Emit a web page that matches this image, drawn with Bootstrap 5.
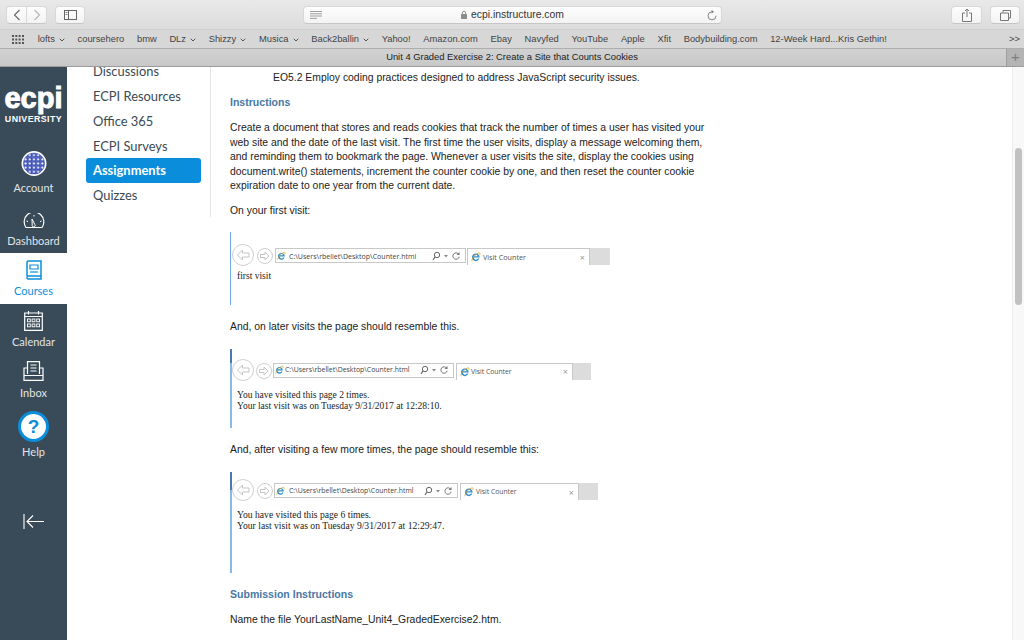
<!DOCTYPE html>
<html lang="en">
<head>
<meta charset="utf-8">
<title>Unit 4 Graded Exercise 2</title>
<link href="https://cdn.jsdelivr.net/npm/bootstrap@5.3.0/dist/css/bootstrap.min.css" rel="stylesheet">
<style>
html,body{height:640px;overflow:hidden;background:#fff}
body{font-family:"Liberation Sans",Arial,sans-serif;color:#222;width:1024px}
.chrome-bar{height:29px;background:linear-gradient(#e9e9e9,#dcdcdc);padding:6px 6px 0 6px}
.tool-btn{height:18px;flex-shrink:0;background:linear-gradient(#fdfdfd,#f3f3f3);border:1px solid #d8d8d8;border-bottom-color:#c6c6c6;border-radius:4px;display:flex;align-items:center;justify-content:center}
.addr{width:419px;margin-left:218px;margin-right:229px;font-size:10.4px;color:#333;padding:0 4px 0 6px}
.addr-host{flex:1;text-align:center;padding-right:4px}
.btn-back{width:21px;border-radius:4px 0 0 4px}
.btn-fwd{width:20px;border-radius:0 4px 4px 0;border-left:0}
.btn-panel,.btn-tabs{width:30px}
.btn-share{width:31px}
.bm-bar{height:20px;background:#d7d7d7;border-top:1px solid #cfcfcf;border-bottom:1px solid #aeaeae;font-size:9.35px;color:#444;padding-left:12px;gap:12.7px;white-space:nowrap}
.bm-grid{margin-right:1px;flex-shrink:0}
.bm-caret{margin-left:4px;vertical-align:0}
.tab-bar{height:18px;background:linear-gradient(#d2d2d2,#c8c8c8);border-bottom:1px solid #9b9b9b;font-size:9.4px;color:#1c1c1c}
.tab-title{flex:1;text-align:center;padding-left:18px}
.tab-plus{width:18px;height:17px;background:#b4b4b4;border-left:1px solid #9f9f9f;color:#7d7d7d;font-size:15px;line-height:16px;text-align:center}
.page-area{height:573px;position:relative}
.side{width:67px;background:#394b58;color:#e1e5e8;font-family:Lato,sans-serif;font-size:11px;flex-shrink:0}
.logo{height:75px;padding-top:14px;text-align:center;color:#fff;overflow:hidden}
.logo-main{font-family:"Liberation Sans",sans-serif;font-weight:700;font-size:29px;line-height:34px;-webkit-text-stroke:1px #fff}
.logo-sub{font-family:"Liberation Sans",sans-serif;font-weight:700;font-size:8.8px;letter-spacing:.45px;line-height:9px;white-space:nowrap}
.side-item{display:flex;flex-direction:column;align-items:center;text-decoration:none;color:inherit;line-height:13px}
.side-item.on{background:#fff;color:#0a8edc}
.it-acct{height:52px;padding-top:9px}.it-acct span{margin-top:5px}
.it-dash{height:59px;padding-top:19px}.it-dash span{margin-top:6px}
.it-course{height:51px;padding-top:7px}.it-course span{margin-top:4px}
.it-cal{height:50px;padding-top:6px}.it-cal span{margin-top:4px}
.it-inbox{height:53px;padding-top:7px}.it-inbox span{margin-top:5px}
.it-help{height:66px;padding-top:4px}.it-help span{margin-top:3px}
.it-collapse{padding-top:41px}
.course-nav{width:144px;height:150px;padding:0 9px 0 19px;border-right:1px solid #e4e4e4;font-family:Lato,sans-serif;font-size:12.9px;color:#3b4a54;flex-shrink:0;margin-right:19px}
.nav-row{height:25px;line-height:24px;padding-left:7px;white-space:nowrap}
.nav-row.first{height:17px;line-height:9px}
.nav-row.on{background:#0a8edc;color:#fff;font-weight:700;border-radius:3px;margin-top:-1px;line-height:25px}
.body-copy{font-size:10.4px;line-height:14.55px;width:700px;color:#222}
.body-copy p{margin:0}
.outcome{padding-left:43px;padding-top:4px}
.sect-h{font-weight:700;color:#4a78a5;font-size:10.55px}
.body-copy .m-i{margin-top:9px}
.body-copy .m-p{margin-top:12px}
.body-copy .m-on{margin-top:10px}
.body-copy .m-a{margin-top:15px}
.body-copy .m-s{margin-top:14px}
.body-copy .m-n{margin-top:11px}
.body-copy .para{width:490px}
.shot{border-left:2px solid #72aee0}
.shot-1{width:380px;height:73px;margin-top:14px;padding-top:12px;border-left-width:1px;padding-left:1px;border-left-color:#6fb0e8}
.shot-2,.shot-3{border-image:linear-gradient(#4a78b5 18%,#86bbe8 18%) 1}
.shot-2{width:361px;height:79px;margin-top:14px;padding-top:10px}
.shot-3{width:368px;height:101px;margin-top:15px;padding-top:7px}
.ie-row{display:flex;align-items:flex-start;font-family:"Open Sans",sans-serif;color:#444}
.ie-f{flex-shrink:0;margin-top:4px}
.shot-1 .ie-f{margin-left:3px;margin-right:2px}
.shot-2 .ie-f{margin-left:2px;margin-right:1px}
.shot-3 .ie-f{margin-left:3px;margin-right:1px}
.ie-addr{border:1px solid #c8c8c8;height:15px;display:flex;align-items:center;padding:0 3px 0 1px;white-space:nowrap;flex-shrink:0;margin-top:4px}
.ie-addr .u{flex:1}
.ie-tab{border:1px solid #c8c8c8;border-bottom:0;height:17px;display:flex;align-items:center;padding:0 4px 0 3px;flex-shrink:0;color:#555;margin-top:4px}
.ie-tab .u{flex:1}
.ie-x{color:#999;font-size:9px;line-height:1}
.ie-fill{background:#dcdcdc;height:17px;flex-shrink:0;margin-top:4px}
.shot-1 .ie-addr{width:191px;font-size:7.05px}
.shot-1 .ie-addr .u{margin-left:3px}
.shot-1 .ie-tab{width:123px;margin-left:1px;font-size:7.2px}
.shot-1 .ie-tab .u{margin-left:2px}
.shot-1 .ie-fill{width:20px}
.shot-2 .ie-addr{width:181px;font-size:6.9px}
.shot-2 .ie-addr .u{margin-left:1px}
.shot-2 .ie-tab{width:117px;margin-left:2px;font-size:6.8px}
.shot-2 .ie-tab .u{margin-left:1px}
.shot-2 .ie-fill{width:18px}
.shot-3 .ie-addr{width:184px;font-size:6.9px}
.shot-3 .ie-addr .u{margin-left:4px}
.shot-3 .ie-tab{width:119px;margin-left:2px;font-size:6.8px}
.shot-3 .ie-tab .u{margin-left:2px}
.shot-3 .ie-fill{width:19px}
.shot-text{font-family:"Liberation Serif",serif;font-size:9.5px;line-height:11px;color:#222;padding-left:5px}
.shot-1 .shot-text{margin-top:5px}
.shot-2 .shot-text{margin-top:9px}
.shot-3 .shot-text{margin-top:8px;font-size:9.65px}
.sb-track{position:absolute;top:0;bottom:0;right:0;width:12px;background:#f8f8f8;border-left:1px solid #ececec}
.sb-thumb{position:absolute;left:2px;top:81px;width:7px;height:157px;background:#c1c1c1;border-radius:4px}
</style>
</head>
<body>
<svg width="0" height="0" class="d-block" aria-hidden="true">
  <defs>
    <symbol id="chev" viewBox="0 0 6 4"><path d="M.7.7 3 3l2.300-2.300" fill="none" stroke="#555" stroke-width="1"/></symbol>
    <symbol id="ie-e" viewBox="0 0 10 10"><path d="M8.600 5.600H2.800a2.200 2.200 0 0 0 4.100 1h1.500A3.800 3.800 0 1 1 8.600 5.600zM2.900 4.300h3.900a2 2 0 0 0-3.900 0z" fill="#2f8fd0"/><path d="M1 9.300C.3 8.400 2.500 3 7.500 1c1.800-.6 1.800.8 1.200 2" fill="none" stroke="#e8a31f" stroke-width=".8"/></symbol>
    <symbol id="ie-back" viewBox="0 0 22 22"><circle cx="11" cy="11" r="10.500" fill="#fff" stroke="#cfcfcf"/><path d="M17 9H10.500V6L5.500 11l5 5v-3H17z" fill="#fff" stroke="#c4c4c4"/></symbol>
    <symbol id="ie-fwd" viewBox="0 0 16 16"><circle cx="8" cy="8" r="7.500" fill="#fff" stroke="#cfcfcf"/><path d="M3.500 6.500H8V4l4 4-4 4V9.500H3.500z" fill="#fff" stroke="#c4c4c4"/></symbol>
    <symbol id="ie-tools" viewBox="0 0 30 10"><circle cx="5" cy="4" r="2.700" fill="none" stroke="#666"/><path d="M3 6 1 8.800" stroke="#666" stroke-width="1.200"/><path d="M12 4h4l-2 2.400z" fill="#888"/><path d="M26.800 3.300a3.200 3.200 0 1 0 .4 2.500" fill="none" stroke="#777"/><path d="M27.500 1v3h-3z" fill="#777"/></symbol>
  </defs>
</svg>
<div class="chrome-bar d-flex">
  <div class="tool-btn btn-back"><svg width="8" height="12" viewBox="0 0 8 12"><path d="M6.500 1 1.500 6l5 5" fill="none" stroke="#666" stroke-width="1.100"/></svg></div>
  <div class="tool-btn btn-fwd"><svg width="8" height="12" viewBox="0 0 8 12"><path d="M1.500 1l5 5-5 5" fill="none" stroke="#b5b5b5" stroke-width="1.100"/></svg></div>
  <div class="tool-btn btn-panel ms-2"><svg width="13" height="10" viewBox="0 0 13 10"><rect x=".5" y=".5" width="12" height="9" fill="none" stroke="#666"/><path d="M4.500 0v10" stroke="#666"/><path d="M1.500 2.500h2M1.500 4.500h2" stroke="#888"/></svg></div>
  <div class="tool-btn addr">
    <svg class="flex-shrink-0" width="12" height="8" viewBox="0 0 12 8"><path d="M0 .5h12M0 2.800h12M0 5h12M0 7.400h7" stroke="#888" stroke-width=".8"/></svg>
    <div class="addr-host"><svg class="me-1" width="6" height="8" viewBox="0 0 6 8"><rect y="3" width="6" height="5" rx=".6" fill="#8c8c8c"/><path d="M1.300 3V2a1.700 1.700 0 0 1 3.400 0v1" fill="none" stroke="#8c8c8c"/></svg>ecpi.instructure.com</div>
    <svg class="flex-shrink-0" width="10" height="11" viewBox="0 0 10 11"><path d="M5 1.800a4 4 0 1 0 4 4" fill="none" stroke="#777" stroke-width=".9"/><path d="M4.600 0 7 1.800 4.600 3.500z" fill="#777"/></svg>
  </div>
  <div class="tool-btn btn-share"><svg width="10" height="14" viewBox="0 0 10 14"><path d="M3 5H.5v8.500h9V5H7M5 9V1M3 3l2-2 2 2" fill="none" stroke="#777"/></svg></div>
  <div class="tool-btn btn-tabs ms-2"><svg width="11" height="11" viewBox="0 0 11 11"><path d="M3 2.500V.5h7.500V8H8.500M.5 3h8v7.500h-8z" fill="none" stroke="#777"/></svg></div>
</div>
<div class="bm-bar d-flex align-items-center">
  <svg class="bm-grid" width="12" height="9" viewBox="0 0 12 9"><g fill="#555"><path d="M0 0h2v2H0zM3.300 0h2v2h-2zM6.600 0h2v2h-2zM10 0h2v2h-2zM0 3.500h2v2H0zM3.300 3.500h2v2h-2zM6.600 3.500h2v2h-2zM10 3.500h2v2h-2zM0 7h2v2H0zM3.300 7h2v2h-2zM6.600 7h2v2h-2zM10 7h2v2h-2z"/></g></svg>
  <span>lofts<svg class="bm-caret" width="6" height="4"><use href="#chev"/></svg></span><span>coursehero</span><span>bmw</span><span>DLz<svg class="bm-caret" width="6" height="4"><use href="#chev"/></svg></span><span>Shizzy<svg class="bm-caret" width="6" height="4"><use href="#chev"/></svg></span><span>Musica<svg class="bm-caret" width="6" height="4"><use href="#chev"/></svg></span><span>Back2ballin<svg class="bm-caret" width="6" height="4"><use href="#chev"/></svg></span><span>Yahoo!</span><span>Amazon.com</span><span>Ebay</span><span>Navyfed</span><span>YouTube</span><span>Apple</span><span>Xfit</span><span>Bodybuilding.com</span><span>12-Week Hard...Kris Gethin!</span>
  <span class="ms-auto me-1">&gt;&gt;</span>
</div>
<div class="tab-bar d-flex align-items-center">
  <div class="tab-title">Unit 4 Graded Exercise 2: Create a Site that Counts Cookies</div>
  <div class="tab-plus">+</div>
</div>
<div class="page-area d-flex overflow-hidden">
  <nav class="side">
    <div class="logo"><div class="logo-main">ecpi</div><div class="logo-sub">UNIVERSITY</div></div>
    <a class="side-item it-acct" href="#">
      <svg width="30" height="30" viewBox="0 0 30 30"><defs><pattern id="tile" width="5" height="5" patternUnits="userSpaceOnUse" x="2.500" y="2.500"><rect width="5" height="5" fill="#3f51b5"/><circle cx="2.500" cy="2.500" r="1.200" fill="#fff"/><path d="M0 0h5M0 0v5" stroke="#8f9ee0" stroke-width=".5"/></pattern></defs><circle cx="15" cy="15" r="14" fill="url(#tile)" stroke="#fff" stroke-width="2"/></svg>
      <span>Account</span>
    </a>
    <a class="side-item it-dash" href="#">
      <svg width="22" height="15" viewBox="0 0 22 15"><path d="M3 14.500A9.800 9.800 0 1 1 19 14.500z" fill="none" stroke="#fff" stroke-width="1.200"/><path d="M9 6l2.800 5.500a1.500 1.500 0 1 1-2.600.6z" fill="none" stroke="#fff"/><path d="M3.500 8l1.500.6M18.500 8l-1.500.6M11 2v1.500" stroke="#fff"/></svg>
      <span>Dashboard</span>
    </a>
    <a class="side-item it-course on" href="#">
      <svg width="16" height="20" viewBox="0 0 16 20"><path d="M1 16V2.500A1.500 1.500 0 0 1 2.500 1H15v15H2.500A1.700 1.700 0 0 0 1 18a1.500 1.500 0 0 0 1.500 1H15v-3" fill="none" stroke="#0a8edc" stroke-width="1.500"/><path d="M4 5h8v4H4z" fill="none" stroke="#0a8edc" stroke-width="1.200"/><path d="M4 12h8" stroke="#0a8edc" stroke-width="1.200"/></svg>
      <span>Courses</span>
    </a>
    <a class="side-item it-cal" href="#">
      <svg width="19" height="21" viewBox="0 0 19 21"><path d="M.7 3h17.600v17.300H.7z" fill="none" stroke="#fff" stroke-width="1.200"/><path d="M.7 6.500h17.600M4.500 1v3.500M14.500 1v3.500" stroke="#fff" stroke-width="1.200"/><g fill="none" stroke="#fff" stroke-width=".9"><rect x="3.500" y="9" width="2.800" height="2.800"/><rect x="8.100" y="9" width="2.800" height="2.800"/><rect x="12.700" y="9" width="2.800" height="2.800"/><rect x="3.500" y="14" width="2.800" height="2.800"/><rect x="8.100" y="14" width="2.800" height="2.800"/><rect x="12.700" y="14" width="2.800" height="2.800"/></g></svg>
      <span>Calendar</span>
    </a>
    <a class="side-item it-inbox" href="#">
      <svg width="21" height="20" viewBox="0 0 21 20"><path d="M4.500 13V.7h12V13M4.500 7H1v12.300h19V7h-3.500M1 14.500h19" fill="none" stroke="#fff" stroke-width="1.200"/><path d="M7.500 4h6M7.500 7h6M7.500 10h6" stroke="#fff" stroke-width="1.100"/></svg>
      <span>Inbox</span>
    </a>
    <a class="side-item it-help" href="#">
      <svg width="31" height="31" viewBox="0 0 31 31"><circle cx="15.500" cy="15.500" r="14" fill="#fff" stroke="#0a8edc" stroke-width="3"/><text x="15.500" y="22" text-anchor="middle" font-family="Liberation Sans,sans-serif" font-weight="700" font-size="19" fill="#0a8edc">?</text></svg>
      <span>Help</span>
    </a>
    <div class="it-collapse d-flex justify-content-center"><svg width="21" height="15" viewBox="0 0 21 15"><path d="M1 0v15M21 7.500H4M10 1.500 4 7.500l6 6" fill="none" stroke="#fff" stroke-width="1.100"/></svg></div>
  </nav>
  <div class="course-nav">
    <div class="nav-row first">Discussions</div>
    <div class="nav-row">ECPI Resources</div>
    <div class="nav-row">Office 365</div>
    <div class="nav-row">ECPI Surveys</div>
    <div class="nav-row on">Assignments</div>
    <div class="nav-row">Quizzes</div>
  </div>
  <main class="body-copy">
    <p class="outcome">EO5.2 Employ coding practices designed to address JavaScript security issues.</p>
    <p class="sect-h m-i">Instructions</p>
    <p class="para m-p">Create a document that stores and reads cookies that track the number of times a user has visited your web site and the date of the last visit. The first time the user visits, display a message welcoming them, and reminding them to bookmark the page. Whenever a user visits the site, display the cookies using document.write() statements, increment the counter cookie by one, and then reset the counter cookie expiration date to one year from the current date.</p>
    <p class="m-on">On your first visit:</p>

    <div class="shot shot-1">
      <div class="ie-row">
        <svg class="flex-shrink-0" width="22" height="22"><use href="#ie-back"/></svg>
        <svg class="ie-f" width="16" height="16"><use href="#ie-fwd"/></svg>
        <div class="ie-addr"><svg width="9" height="10"><use href="#ie-e"/></svg><span class="u">C:\Users\rbellet\Desktop\Counter.html</span><svg width="30" height="10"><use href="#ie-tools"/></svg></div>
        <div class="ie-tab"><svg width="10" height="10"><use href="#ie-e"/></svg><span class="u">Visit Counter</span><span class="ie-x">×</span></div>
        <div class="ie-fill"></div>
      </div>
      <div class="shot-text">first visit</div>
    </div>

    <p class="m-a">And, on later visits the page should resemble this.</p>

    <div class="shot shot-2">
      <div class="ie-row">
        <svg class="flex-shrink-0" width="22" height="22"><use href="#ie-back"/></svg>
        <svg class="ie-f" width="16" height="16"><use href="#ie-fwd"/></svg>
        <div class="ie-addr"><svg width="9" height="10"><use href="#ie-e"/></svg><span class="u">C:\Users\rbellet\Desktop\Counter.html</span><svg width="30" height="10"><use href="#ie-tools"/></svg></div>
        <div class="ie-tab"><svg width="10" height="10"><use href="#ie-e"/></svg><span class="u">Visit Counter</span><span class="ie-x">×</span></div>
        <div class="ie-fill"></div>
      </div>
      <div class="shot-text">You have visited this page 2 times.<br>Your last visit was on Tuesday 9/31/2017 at 12:28:10.</div>
    </div>

    <p class="m-a">And, after visiting a few more times, the page should resemble this:</p>

    <div class="shot shot-3">
      <div class="ie-row">
        <svg class="flex-shrink-0" width="22" height="22"><use href="#ie-back"/></svg>
        <svg class="ie-f" width="16" height="16"><use href="#ie-fwd"/></svg>
        <div class="ie-addr"><svg width="9" height="10"><use href="#ie-e"/></svg><span class="u">C:\Users\rbellet\Desktop\Counter.html</span><svg width="30" height="10"><use href="#ie-tools"/></svg></div>
        <div class="ie-tab"><svg width="10" height="10"><use href="#ie-e"/></svg><span class="u">Visit Counter</span><span class="ie-x">×</span></div>
        <div class="ie-fill"></div>
      </div>
      <div class="shot-text">You have visited this page 6 times.<br>Your last visit was on Tuesday 9/31/2017 at 12:29:47.</div>
    </div>

    <p class="sect-h m-s">Submission Instructions</p>
    <p class="m-n">Name the file YourLastName_Unit4_GradedExercise2.htm.</p>
  </main>
  <div class="sb-track"><div class="sb-thumb"></div></div>
</div>
<script src="https://cdn.jsdelivr.net/npm/bootstrap@5.3.0/dist/js/bootstrap.bundle.min.js"></script>
</body>
</html>
